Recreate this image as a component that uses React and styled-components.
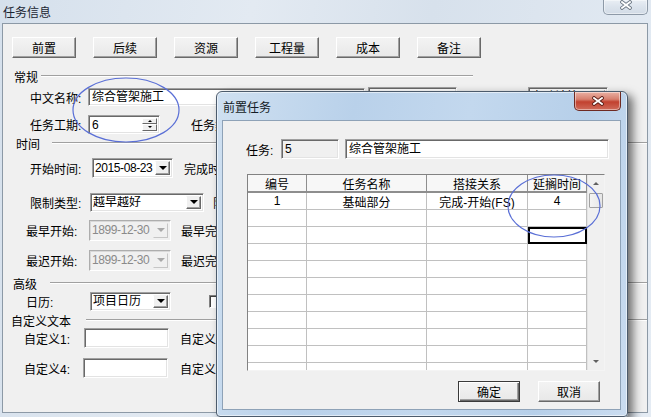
import React from 'react';
import styled, { createGlobalStyle } from 'styled-components';

const GlobalStyle = createGlobalStyle`
  * { box-sizing: border-box; }
  html, body { margin: 0; padding: 0; }
  body {
    font-family: "Liberation Sans", "Noto Sans CJK SC", sans-serif;
    font-size: 12px;
    color: #000;
    overflow: hidden;
  }
`;

const Screen = styled.div`
  position: relative;
  width: 651px;
  height: 417px;
  overflow: hidden;
  background: linear-gradient(100deg, #d5e0ec 0%, #e3eaf2 35%, #d7e1ec 60%, #e5ecf4 100%);
`;

const MainWindow = styled.div`
  display: flex;
  flex-direction: column;
  height: 100%;
  padding: 0 3px 4px 2px;
`;

const TitleBar = styled.div`
  position: relative;
  flex: none;
  height: 23px;
  display: flex;
  align-items: center;
  padding-left: 1px;
  color: #1b2633;
`;

const CloseButton = styled.div`
  position: absolute;
  top: 0;
  right: ${p => p.$right}px;
  width: ${p => p.$w}px;
  height: ${p => p.$h}px;
  display: flex;
  align-items: center;
  justify-content: center;
  padding-bottom: ${p => p.$pb || 0}px;
  border: 1px solid ${p => (p.$active ? '#6e2a22' : '#8d99a7')};
  border-top: none;
  border-radius: 0 0 5px 5px;
  background: ${p =>
    p.$active
      ? 'linear-gradient(180deg, #eab0a3 0%, #d7806f 40%, #c2412f 55%, #cf6b5a 100%)'
      : 'linear-gradient(180deg, #e9eef4 0%, #dbe3ec 50%, #d2dbe6 100%)'};
  box-shadow: inset 0 0 0 1px rgba(255, 255, 255, 0.45);
`;

const Client = styled.div`
  flex: 1;
  display: flex;
  flex-direction: column;
  border: 1px solid #8c99a6;
  background: #f0f0f0;
  overflow: hidden;
`;

const ButtonBar = styled.div`
  display: flex;
  flex: none;
  gap: ${p => p.$gap}px;
  margin: ${p => p.$mt}px ${p => p.$pr || 0}px 0 ${p => p.$ml || 0}px;
  justify-content: ${p => (p.$end ? 'flex-end' : 'flex-start')};
`;

const Button = styled.button`
  flex: none;
  width: ${p => p.$w}px;
  height: 21px;
  padding: 0;
  font: inherit;
  color: #000;
  background: linear-gradient(180deg, #f3f3f3 0%, #e8e8e8 100%);
  border: 1px solid;
  border-color: ${p => (p.$default ? '#3a3a3a' : '#ffffff #696969 #696969 #ffffff')};
  box-shadow: ${p =>
    p.$default
      ? 'inset 1px 1px #ffffff, inset -1px -1px #696969, inset -2px -2px #a0a0a0'
      : 'inset -1px -1px #a0a0a0'};
`;

const Section = styled.div`
  display: flex;
  align-items: center;
  flex: none;
  height: ${p => p.$h || 14}px;
  margin-top: ${p => p.$mt || 0}px;
  padding-left: ${p => p.$left}px;
  white-space: nowrap;
`;

const Rule = styled.span`
  flex: none;
  width: ${p => p.$w}px;
  height: 2px;
  margin-left: ${p => p.$ml}px;
  border-top: 1px solid #a0a0a0;
  border-bottom: 1px solid #ffffff;
`;

const Row = styled.div`
  display: flex;
  align-items: center;
  flex: none;
  height: ${p => p.$h || 22}px;
  margin-top: ${p => p.$mt || 0}px;
  padding-left: ${p => p.$left}px;
  white-space: nowrap;
`;

const Label = styled.span`
  flex: none;
  width: ${p => (p.$w ? `${p.$w}px` : 'auto')};
  margin-left: ${p => p.$ml || 0}px;
`;

const Field = styled.div`
  flex: none;
  position: relative;
  width: ${p => p.$w}px;
  height: ${p => p.$h || 20}px;
  margin-left: ${p => p.$ml || 0}px;
  display: flex;
  align-items: ${p => (p.$top ? 'flex-start' : 'center')};
  padding: ${p => (p.$top ? '2px 3px 0' : '0 3px')};
  line-height: 14px;
  background: ${p => (p.$readOnly ? '#f0f0f0' : '#ffffff')};
  border: 1px solid;
  border-color: #a0a0a0 #ffffff #ffffff #a0a0a0;
  box-shadow: inset 1px 1px #696969, inset -1px -1px #e3e3e3;
  overflow: hidden;
  white-space: nowrap;
`;

const Spinner = styled.div`
  position: absolute;
  top: 2px;
  right: 2px;
  bottom: 2px;
  width: 15px;
  display: flex;
  flex-direction: column;
`;

const SpinBtn = styled.div`
  flex: 1;
  display: flex;
  align-items: center;
  justify-content: center;
  background: #f0f0f0;
  border: 1px solid;
  border-color: #ffffff #696969 #696969 #ffffff;
  &::after {
    content: '';
    border-left: 2px solid transparent;
    border-right: 2px solid transparent;
    ${p => (p.$up ? 'border-bottom' : 'border-top')}: 2px solid #000;
  }
`;

const Combo = styled.div`
  flex: none;
  width: ${p => p.$w}px;
  height: ${p => p.$h || 20}px;
  margin-left: ${p => p.$ml || 0}px;
  display: flex;
  align-items: stretch;
  padding: 2px 2px 2px 1px;
  background: ${p => (p.$disabled ? '#f0f0f0' : '#ffffff')};
  border: 1px solid;
  border-color: ${p => (p.$disabled ? '#adadad #ffffff #ffffff #adadad' : '#a0a0a0 #ffffff #ffffff #a0a0a0')};
  box-shadow: ${p =>
    p.$disabled ? 'inset 1px 1px #d8d8d8' : 'inset 1px 1px #696969, inset -1px -1px #e3e3e3'};
  white-space: nowrap;
  overflow: hidden;
`;

const ComboText = styled.span`
  flex: 1;
  display: flex;
  align-items: center;
  padding-left: 1px;
  line-height: 12px;
  overflow: hidden;
  letter-spacing: ${p => (p.$tight ? '-0.4px' : '0')};
  color: ${p => (p.$disabled ? '#8a8a8a' : '#000')};
`;

const DropBtn = styled.span`
  flex: none;
  width: 15px;
  display: flex;
  align-items: center;
  justify-content: center;
  background: #f0f0f0;
  border: 1px solid;
  border-color: ${p => (p.$disabled ? '#f0f0f0 #c6c6c6 #c6c6c6 #f0f0f0' : '#f0f0f0 #696969 #696969 #ffffff')};
  box-shadow: ${p => (p.$disabled ? 'none' : 'inset -1px -1px #a0a0a0')};
  &::after {
    content: '';
    border-left: 4px solid transparent;
    border-right: 4px solid transparent;
    border-top: 4px solid ${p => (p.$disabled ? '#a8a8a8' : '#000')};
  }
`;

const CheckBox = styled.span`
  flex: none;
  width: 13px;
  height: 13px;
  margin-left: ${p => p.$ml}px;
  background: #ffffff;
  border: 1px solid;
  border-color: #808080 #ffffff #ffffff #808080;
  box-shadow: inset 1px 1px #404040;
`;

/* dialog */

const Dialog = styled.div`
  position: absolute;
  left: 216px;
  top: 91px;
  width: 412px;
  height: 326px;
  display: flex;
  flex-direction: column;
  border: 1px solid #4c5b6c;
  border-radius: 6px 6px 4px 4px;
  background: linear-gradient(100deg, #cfe0f1 0%, #b9d1ea 30%, #c3d8ee 55%, #b6cfe9 80%, #cadcf0 100%);
  box-shadow: inset 0 0 0 1px rgba(255, 255, 255, 0.55), 5px 4px 10px rgba(0, 0, 0, 0.55);
`;

const DialogTitle = styled.div`
  position: relative;
  flex: none;
  height: 28px;
  display: flex;
  align-items: center;
  padding-left: 6px;
  color: #141c26;
`;

const DialogClient = styled.div`
  flex: 1;
  display: flex;
  flex-direction: column;
  margin: 0 6px 6px 5px;
  border: 1px solid #8ea2b7;
  background: #f0f0f0;
`;

const Grid = styled.div`
  flex: none;
  display: flex;
  width: 358px;
  height: 197px;
  margin: 15px 0 0 24px;
  background: #ffffff;
  border: 1px solid;
  border-color: #828282 #f4f4f4 #f4f4f4 #828282;
`;

const Table = styled.div`
  flex: 1;
  display: flex;
  flex-direction: column;
  overflow: hidden;
`;

const TRow = styled.div`
  flex: none;
  display: grid;
  grid-template-columns: 59px 120px 101px 59px;
  height: ${p => (p.$head ? 18 : 17)}px;
`;

const Cell = styled.div`
  display: flex;
  align-items: center;
  justify-content: center;
  white-space: nowrap;
  overflow: hidden;
  border-right: 1px solid #c0c0c0;
  border-bottom: 1px solid #c0c0c0;
  outline: ${p => (p.$selected ? '2px solid #000' : 'none')};
  outline-offset: -2px;
`;

const HeadCell = styled(Cell)`
  background: #f7f7f7;
  border-right-color: #8e8e8e;
  border-bottom: 2px solid #8e8e8e;
`;

const ScrollBar = styled.div`
  flex: none;
  width: 17px;
  display: flex;
  flex-direction: column;
  background: #f0f0f0;
  border-left: 1px solid #e4e4e4;
`;

const ScrollArrow = styled.div`
  flex: none;
  height: 17px;
  display: flex;
  align-items: center;
  justify-content: center;
  &::after {
    content: '';
    border-left: 3px solid transparent;
    border-right: 3px solid transparent;
    ${p => (p.$up ? 'border-bottom' : 'border-top')}: 3px solid #606060;
  }
`;

const Thumb = styled.div`
  flex: none;
  height: 15px;
  margin: 1px 1px 0 1px;
  background: linear-gradient(90deg, #f4f4f4 0%, #e6e6e6 100%);
  border: 1px solid #a2a2a2;
  border-radius: 1px;
`;

const Track = styled.div`
  flex: 1;
`;

const Annotations = styled.svg`
  position: absolute;
  left: 0;
  top: 0;
  pointer-events: none;
`;

const CrossGlyph = ({ outline }) => (
  <svg width="12" height="10" viewBox="0 0 12 10">
    <path d="M2 2 L10 8 M10 2 L2 8" stroke={outline} strokeWidth="3.6" strokeLinecap="square" />
    <path d="M2 2 L10 8 M10 2 L2 8" stroke="#ffffff" strokeWidth="1.8" strokeLinecap="square" />
  </svg>
);

const DropDown = ({ w, h, ml, text, disabled, tight }) => (
  <Combo $w={w} $h={h} $ml={ml} $disabled={disabled}>
    <ComboText $disabled={disabled} $tight={tight}>{text}</ComboText>
    <DropBtn $disabled={disabled} />
  </Combo>
);

const mainButtons = ['前置', '后续', '资源', '工程量', '成本', '备注'];

const columns = ['编号', '任务名称', '搭接关系', '延搁时间'];

const predecessors = [
  ['1', '基础部分', '完成-开始(FS)', '4'],
  ['', '', '', ''],
  ['', '', '', ''],
  ['', '', '', ''],
  ['', '', '', ''],
  ['', '', '', ''],
  ['', '', '', ''],
  ['', '', '', ''],
  ['', '', '', ''],
  ['', '', '', ''],
  ['', '', '', ''],
];

export default function App() {
  return (
    <Screen>
      <GlobalStyle />
      <MainWindow>
        <TitleBar>
          任务信息
          <CloseButton $right={0} $w={45} $h={15} $pb={4}>
            <CrossGlyph outline="#6f7a86" />
          </CloseButton>
        </TitleBar>
        <Client>
          <ButtonBar $gap={17} $mt={13} $ml={9}>
            {mainButtons.map(b => (
              <Button key={b} $w={64}>{b}</Button>
            ))}
          </ButtonBar>

          <Section $mt={11} $left={11}>
            <span>常规</span>
            <Rule $ml={3} $w={432} />
          </Section>
          <Row $mt={2} $h={24} $left={27}>
            <Label $w={58}>中文名称:</Label>
            <Field $w={277} $h={18}>综合管架施工</Field>
            <Field $w={89} $ml={3} />
            <Label $ml={11} $w={60}>工作类型</Label>
            <DropDown w={80} text="自动计算" />
          </Row>
          <Row $mt={3} $h={24} $left={27}>
            <Label $w={58}>任务工期:</Label>
            <Field $w={72} $h={19} $top>
              6
              <Spinner>
                <SpinBtn $up />
                <SpinBtn />
              </Spinner>
            </Field>
            <Label $ml={31}>任务类型</Label>
          </Row>

          <Section $left={13}>
            <span>时间</span>
            <Rule $ml={12} $w={600} />
          </Section>
          <Row $mt={7} $left={27}>
            <Label $w={62}>开始时间:</Label>
            <DropDown w={81} text="2015-08-23" tight />
            <Label $ml={11}>完成时间</Label>
          </Row>
          <Row $mt={12} $left={27}>
            <Label $w={60}>限制类型:</Label>
            <DropDown w={114} h={19} text="越早越好" />
            <Label $ml={9}>限制日期</Label>
          </Row>
          <Row $mt={6} $left={23}>
            <Label $w={63}>最早开始:</Label>
            <DropDown w={82} h={21} text="1899-12-30" disabled tight />
            <Label $ml={10}>最早完成</Label>
          </Row>
          <Row $mt={8} $left={23}>
            <Label $w={63}>最迟开始:</Label>
            <DropDown w={82} h={21} text="1899-12-30" disabled tight />
            <Label $ml={10}>最迟完成</Label>
          </Row>

          <Section $mt={5} $left={10}>
            <span>高级</span>
            <Rule $ml={13} $w={600} />
          </Section>
          <Row $left={23}>
            <Label $w={64}>日历:</Label>
            <DropDown w={81} h={19} text="项目日历" />
            <CheckBox $ml={38} />
          </Row>

          <Section $mt={2} $h={12} $left={8}>
            <span>自定义文本</span>
            <Rule $ml={15} $w={600} />
          </Section>
          <Row $mt={1} $left={21}>
            <Label $w={60}>自定义1:</Label>
            <Field $w={85} />
            <Label $ml={11}>自定义2:</Label>
          </Row>
          <Row $mt={8} $left={21}>
            <Label $w={59}>自定义4:</Label>
            <Field $w={85} />
            <Label $ml={12}>自定义5:</Label>
          </Row>
        </Client>
      </MainWindow>

      <Dialog>
        <DialogTitle>
          前置任务
          <CloseButton $right={6} $w={47} $h={19} $active>
            <CrossGlyph outline="#5a1d16" />
          </CloseButton>
        </DialogTitle>
        <DialogClient>
          <Row $mt={18} $h={20} $left={23}>
            <Label $w={35}>任务:</Label>
            <Field $w={58} $readOnly $top>5</Field>
            <Field $w={264} $ml={6}>综合管架施工</Field>
          </Row>
          <Grid>
            <Table>
              <TRow $head>
                {columns.map(c => (
                  <HeadCell key={c}>{c}</HeadCell>
                ))}
              </TRow>
              {predecessors.map((r, i) => (
                <TRow key={i}>
                  {r.map((v, j) => (
                    <Cell key={j} $selected={i === 2 && j === 3}>{v}</Cell>
                  ))}
                </TRow>
              ))}
            </Table>
            <ScrollBar>
              <ScrollArrow $up />
              <Thumb />
              <Track />
              <ScrollArrow />
            </ScrollBar>
          </Grid>
          <ButtonBar $gap={18} $mt={10} $pr={20} $end>
            <Button $w={62} $default>确定</Button>
            <Button $w={62}>取消</Button>
          </ButtonBar>
        </DialogClient>
      </Dialog>

      <Annotations width="651" height="417" viewBox="0 0 651 417">
        <ellipse cx="126" cy="110" rx="53" ry="32" fill="none" stroke="#5a6fd6" strokeWidth="1.2" />
        <ellipse cx="554" cy="206" rx="46" ry="31" fill="none" stroke="#5a6fd6" strokeWidth="1.2" />
      </Annotations>
    </Screen>
  );
}
